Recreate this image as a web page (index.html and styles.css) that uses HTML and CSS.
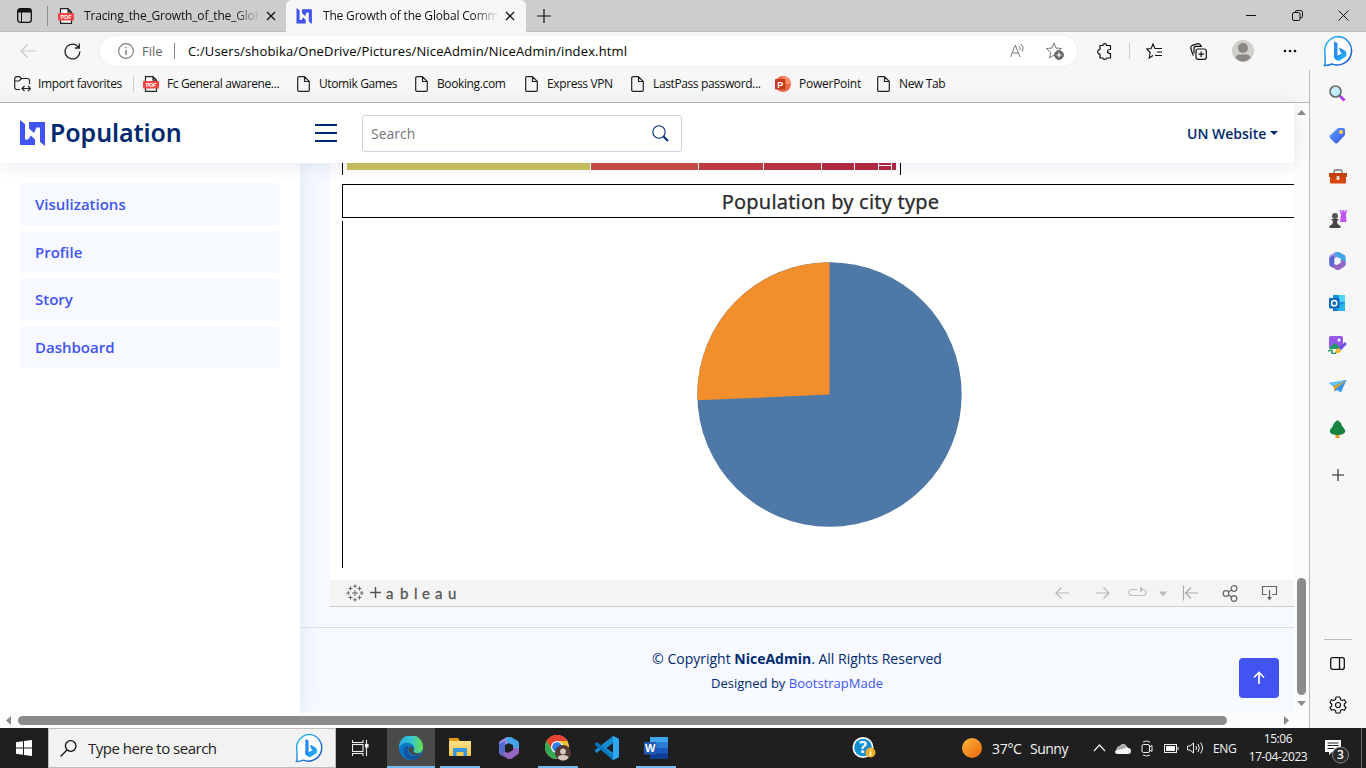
FILE: index.html
```html
<!DOCTYPE html>
<html lang="en">
<head>
<meta charset="utf-8">
<title>The Growth of the Global Community</title>
<link rel="stylesheet" href="styles.css">
</head>
<body>
<svg class="defs" width="0" height="0">
  <defs>
    <linearGradient id="gBing" x1="0" y1="0" x2="1" y2="1"><stop offset="0" stop-color="#22c3f5"/><stop offset="1" stop-color="#1b49c8"/></linearGradient>
    <linearGradient id="gB" x1="0" y1="0" x2="1" y2="1"><stop offset="0" stop-color="#1a6ff0"/><stop offset="1" stop-color="#28c0f8"/></linearGradient>
    <linearGradient id="gTag" x1="0" y1="0" x2="1" y2="1"><stop offset="0" stop-color="#5aa4ff"/><stop offset="1" stop-color="#3b4df0"/></linearGradient>
    <linearGradient id="gEdge" x1="0" y1="0" x2="1" y2="0"><stop offset="0" stop-color="#2aa8e8"/><stop offset=".5" stop-color="#35c4cf"/><stop offset="1" stop-color="#6be04a"/></linearGradient>
    <linearGradient id="gSun" x1="0" y1="0" x2="1" y2="1"><stop offset="0" stop-color="#f5b83a"/><stop offset="1" stop-color="#f0640a"/></linearGradient>
    <linearGradient id="gFolder" x1="0" y1="0" x2="0" y2="1"><stop offset="0" stop-color="#ffe08a"/><stop offset="1" stop-color="#f8c843"/></linearGradient>
  </defs>
  <symbol id="bing" viewBox="0 0 32 32"><path d="M16 1.500A14.300 14.300 0 1 1 9 29C6.500 30 4 30.500 1.500 30.500C2.800 28 2.500 25 1.700 16A14.300 14.300 0 0 1 16 1.500Z" fill="#fff" stroke="url(#gBing)" stroke-width="1.500"/><path d="M11 6.500L14.500 8V20L11 22.500Z" fill="#2a8cf5"/><path d="M16 12.500L21 15Q25 17.500 23 21.500L16.500 25.500Q13 26.500 11 22.500V19L14.500 20.500L19 18.500L17.300 17Z" fill="url(#gB)"/></symbol>
  <symbol id="logo" viewBox="0 0 26 26"><path d="M0 0L5 4V19.500H8L11 15.500L15 19.500V25H0Z" fill="#4154f1"/><path d="M9 2H25V26L20 22V7.500H16.500L14 13L9 8.500Z" fill="#4154f1"/></symbol>
  <symbol id="page" viewBox="0 0 13 16"><path d="M.700 2Q.700 .700 2 .700H7.500L12.300 5.500V14Q12.300 15.300 11 15.300H2Q.700 15.300 .700 14ZM7.500 .700V5.500H12.300" fill="none" stroke="#222" stroke-width="1.200" stroke-linejoin="round"/></symbol>
  <symbol id="x" viewBox="0 0 10 10"><path d="M1 1L9 9M9 1L1 9" stroke="#111" stroke-width="1.300"/></symbol>
  <symbol id="m365" viewBox="0 0 20 22"><path d="M8 0L1 4Q0 5 0 7V15Q0 17 2 18L6 20Q3 17 6 14V8L13 4Z" fill="#a08be8"/><path d="M8 0L12 0L19 4Q20 5 20 7V14L14 12V8L9 6Q6 3 8 0Z" fill="#43a5e8"/><path d="M20 12V16L18 18L12 22H9L3 18Q2 16 5 14.500L9 16L14 13V10Z" fill="#9466c4"/><path d="M0 12V7L6 4V14Q4 15 5 19L1 17Z" fill="#5469d0"/></symbol>
</svg>

<div class="tabbar">
  <span class="tab-menu"><svg width="15" height="15" viewBox="0 0 15 15"><rect x=".700" y=".700" width="13.600" height="13.600" rx="2.500" fill="none" stroke="#111" stroke-width="1.300"/><path d="M1 3Q1 1 3 1H12Q14 1 14 3V4.500H1Z" fill="#111"/><path d="M4.500 4V14" stroke="#111"/></svg></span>
  <div class="tab">
    <svg width="16" height="16"><path d="M2.500 8V.700H10L13.500 4.200V15.300H2.500V12M10 .700V4.200H13.500" fill="#fff" stroke="#222" stroke-width="1.200"/><rect x="0" y="5" width="16" height="7.500" rx="1" fill="#f94444"/><text x="8" y="10.900" class="pdf-text">PDF</text></svg><span class="tab-title">Tracing_the_Growth_of_the_Global</span><svg width="10" height="10"><use href="#x"/></svg>
  </div>
  <div class="tab tab-active">
    <svg width="17" height="16"><use href="#logo"/></svg><span class="tab-title">The Growth of the Global Community</span><svg width="10" height="10"><use href="#x"/></svg>
  </div>
  <svg class="new-tab" width="14" height="14"><path d="M7 0V14M0 7H14" stroke="#111" stroke-width="1.200"/></svg>
  <div class="window-buttons">
    <svg width="11" height="11"><path d="M0 5.500H10" stroke="#111"/></svg>
    <svg width="11" height="11" fill="none" stroke="#111"><rect x=".500" y="2.500" width="7.500" height="8" rx="1.500"/><path d="M3 2.500Q3 .500 5 .500H8.500Q10.500 .500 10.500 2.500V6.500Q10.500 8 8 8"/></svg>
    <svg width="11" height="11"><path d="M.500 .500L10.500 10.500M10.500 .500L.500 10.500" stroke="#111"/></svg>
  </div>
</div>

<div class="toolbar">
  <span class="slot"><svg width="17" height="14" fill="none" stroke="#c9c9c9" stroke-width="1.200"><path d="M16 7H1M7.500 .500L1 7L7.500 13.500"/></svg></span>
  <span class="slot"><svg width="17" height="17" fill="none" stroke="#222" stroke-width="1.300"><path d="M15.900 8.500A7.400 7.400 0 1 1 12 2L15 4.500M15.300 .500V5H10.800"/></svg></span>
  <div class="address">
    <svg width="16" height="16" fill="none" stroke="#777" stroke-width="1.100"><circle cx="8" cy="8" r="7.400"/><path d="M8 7V12M8 4V5.300" stroke-width="1.400"/></svg>
    <span class="scheme">File</span>
    <span class="url">C:/Users/shobika/OneDrive/Pictures/NiceAdmin/NiceAdmin/index.html</span>
    <svg class="read" width="16" height="16" fill="none" stroke="#777"><path d="M.500 14L5.300 2L10 14M2.200 10H8.500M9 3Q11 4.500 10 7M11 1Q14.500 4 12.500 8.500"/></svg>
    <svg width="18" height="18" fill="none" stroke="#777"><path d="M8 1L10 6L15.500 6.500L11.500 10M8 1L6 6L.500 6.500L4.700 10.500L3.500 16L8 13"/><circle cx="13" cy="13" r="4.500" fill="#666"/><path d="M13 10.500V15.500M10.500 13H15.500" stroke="#fff" stroke-width="1.200"/></svg>
  </div>
  <span class="slot"><svg width="16" height="17" fill="none" stroke="#111" stroke-width="1.200"><path d="M3 2.500H6Q6 .700 7.700 .700T9.500 2.500H13.500V6.500Q10.500 6.500 10.500 8.500T13.500 10.500V15H9.500Q9.500 16.300 7.700 16.300T6 15H3V11Q.700 11 .700 8.800T3 6.500Z" stroke-linejoin="round"/></svg></span>
  <i class="bar-sep"></i>
  <span class="slot"><svg width="17" height="17" fill="none" stroke="#111" stroke-width="1.100"><path d="M11 5.500L9 5.500L7 1L5.200 5.500L.800 6L4.200 9.500L3.200 15L7 12.500M9.500 5.500H16M11 9H16M9 12.500H16"/></svg></span>
  <span class="slot"><svg width="17" height="17" fill="none" stroke="#111" stroke-width="1.200"><rect x="6" y="6" width="10.300" height="10.300" rx="2"/><path d="M11.100 8.500V14M8.500 11.200H14M3.500 12.500Q2.500 12 2.500 10.500L.800 5.500Q.500 3 2.500 2.300L8 .700Q10 .500 11 3M4 10.500V5.500Q4 3.300 6 3.300H12"/></svg></span>
  <span class="slot"><svg width="22" height="22"><circle cx="11" cy="11" r="11" fill="#d0cfcc"/><circle cx="11" cy="8" r="5" fill="#8b8784"/><path d="M3.500 18Q4 14.500 8 14.500H14Q18 14.500 18.500 18Q11 25 3.500 18" fill="#8b8784"/></svg></span>
  <span class="slot"><svg width="14" height="4" fill="#111"><circle cx="2" cy="2" r="1.300"/><circle cx="7" cy="2" r="1.300"/><circle cx="12" cy="2" r="1.300"/></svg></span>
  <span class="slot"><svg width="32" height="32"><use href="#bing"/></svg></span>
</div>

<div class="body-row">
  <div class="browser-main">
    <div class="bookmarks">
      <span><svg width="17" height="16" fill="none" stroke="#222" stroke-width="1.200"><path d="M6 13.500H3Q.700 13.500 .700 11V3Q.700 .700 3 .700H5.500L7.500 2.500H13.500Q15.500 2.500 15.500 4.500V8M.700 5H5L7.500 2.500M8.500 12.500H16M10.500 10L8 12.500L10.500 15M14 10L16.500 12.500L14 15"/></svg>Import favorites</span>
      <i></i>
      <span><svg width="16" height="16"><path d="M2.500 8V.700H10L13.500 4.200V15.300H2.500V12M10 .700V4.200H13.500" fill="#fff" stroke="#222" stroke-width="1.200"/><rect x="0" y="5" width="16" height="7.500" rx="1" fill="#f94444"/><text x="8" y="10.900" class="pdf-text">PDF</text></svg>Fc General awarene...</span>
      <span><svg width="13" height="16"><use href="#page"/></svg>Utomik Games</span>
      <span><svg width="13" height="16"><use href="#page"/></svg>Booking.com</span>
      <span><svg width="13" height="16"><use href="#page"/></svg>Express VPN</span>
      <span><svg width="13" height="16"><use href="#page"/></svg>LastPass password...</span>
      <span class="ppt"><svg width="16" height="16"><circle cx="8" cy="8" r="8" fill="#ed6c47"/><path d="M8 0A8 8 0 0 1 16 8H8Z" fill="#ff8f6b"/><rect y="3" width="10.500" height="10.500" rx="1" fill="#c43e1c"/><text x="5.200" y="11.500" class="ppt-text">P</text></svg>PowerPoint</span>
      <span><svg width="13" height="16"><use href="#page"/></svg>New Tab</span>
    </div>
    <div class="viewport-row">
      <div class="viewport">
        <header class="header">
          <svg class="brand-logo" width="26" height="26"><use href="#logo"/></svg>
          <span class="brand">Population</span>
          <svg class="burger" width="22" height="20"><path d="M0 2H22M0 10H22M0 18H22" stroke="#012970" stroke-width="2"/></svg>
          <div class="search"><span>Search</span><svg width="17" height="17" fill="none" stroke="#012970"><circle cx="7" cy="7" r="6.200" stroke-width="1.100"/><path d="M11.500 11.500L16 16" stroke-width="2"/></svg></div>
          <span class="un">UN Website</span><i class="caret"></i>
        </header>
        <div class="page">
          <nav class="sidenav"><a>Visulizations</a><a>Profile</a><a>Story</a><a>Dashboard</a></nav>
          <main class="main">
            <div class="viz">
              <div class="treemap">
                <b class="t1"></b><b class="t2"></b><b class="t3"></b><b class="t4"></b><b class="t5"></b><b class="t6"></b><b class="t7"></b><b class="t8"></b>
              </div>
              <h2 class="viz-title">Population by city type</h2>
              <div class="chart"><svg width="267" height="267" viewBox="-133.500 -133.500 267 267"><circle r="132.200" fill="#4e79a7"/><path d="M0 0L-132 5.800A132.200 132.200 0 0 1 0 -132.200Z" fill="#f28e2b"/></svg></div>
              <div class="tb-bar">
                <svg class="tb-mark" width="18" height="18" stroke="#666" stroke-width="1"><path d="M9 6V12M6 9H12M9 .500V4M7.200 2.200H10.800M9 14V17.500M7.200 15.800H10.800M2.200 7V11M.500 9H4M15.800 7V11M14 9H17.500M4.500 2.500V6.500M2.500 4.500H6.500M13.500 2.500V6.500M11.500 4.500H15.500M4.500 11.500V15.500M2.500 13.500H6.500M13.500 11.500V15.500M11.500 13.500H15.500"/></svg>
                <span class="tb-word"><svg width="11" height="11"><path d="M5.500 0V11M0 5.500H11" stroke="#555" stroke-width="1.500"/></svg><em>a</em><em>b</em><em>l</em><em>e</em><em>a</em><em>u</em></span>
                <svg class="tb-tools" width="226" height="22" fill="none" stroke="#b5b5b5" stroke-width="1.200">
                  <path d="M15 11H2M7.500 5.500L2 11L7.500 16.500M42 11H55M49.500 5.500L55 11L49.500 16.500"/>
                  <path d="M83 7.500H78Q75 7.500 75 10.500T78 13.500H89Q92 13.500 92 10.500Q92 8 90 7.500H86" stroke="#c0c0c0"/><path d="M86 4.500L90 7.500L86 10.500Z" fill="#c0c0c0" stroke="none"/><path d="M105 9.500H113L109 14.500Z" fill="#bbb" stroke="none"/>
                  <path d="M129.500 3.500V18.500M144 11H131.500M137 5.500L131.500 11L137 16.500" stroke="#aaa"/>
                  <g stroke="#666" stroke-width="1.200"><circle cx="172" cy="11.500" r="2.800"/><circle cx="180" cy="6.500" r="2.800"/><circle cx="180" cy="16.500" r="2.800"/><path d="M174.400 10L177.600 8M174.400 13L177.600 15M212.500 12.500H208.500V4.500H222.500V12.500H218.500M215.500 8V16"/><path d="M213 15H218L215.500 18.500Z" fill="#666" stroke="none"/></g>
                </svg>
              </div>
            </div>
            <footer class="footer">
              <div class="copyright">© Copyright <strong>NiceAdmin</strong>. All Rights Reserved</div>
              <div class="credits">Designed by <span>BootstrapMade</span></div>
              <a class="top"><svg width="12" height="14" fill="none" stroke="#fff" stroke-width="1.700"><path d="M6 13V1.500M1 6.500L6 1.500L11 6.500"/></svg></a>
            </footer>
          </main>
        </div>
      </div>
      <div class="vscroll"><svg width="9" height="6"><path d="M0 5L4.500 0L9 5Z" fill="#8b8b8b"/></svg><i></i><svg width="9" height="6"><path d="M0 0L4.500 5L9 0Z" fill="#8b8b8b"/></svg></div>
    </div>
    <div class="hscroll"><svg width="5" height="9"><path d="M5 0L0 4.500L5 9Z" fill="#8b8b8b"/></svg><i></i><svg width="5" height="9"><path d="M0 0L5 4.500L0 9Z" fill="#8b8b8b"/></svg></div>
  </div>
  <aside class="edge-side">
    <span><svg width="17" height="17"><path d="M10.500 10.500L12.500 12.500" stroke="#666" stroke-width="2"/><circle cx="6.500" cy="6.500" r="5.500" fill="#c4ebff" stroke="#666" stroke-width="1.600"/><path d="M11.500 11.500L15.500 15.500" stroke="#b33cf0" stroke-width="3"/></svg></span>
    <span><svg width="17" height="17"><path d="M9 1H14Q16 1 16 3V8L8.500 16Q7 17 5.500 15.500L1 11Q0 9.500 1 8.500Z" fill="url(#gTag)"/><circle cx="12" cy="5" r="2" fill="#ffd43d"/></svg></span>
    <span><svg width="18" height="16"><path d="M5 5V2Q5 1 6 1H12Q13 1 13 2V5" fill="none" stroke="#777" stroke-width="1.300"/><rect x="1" y="8" width="16" height="6.500" rx="1" fill="#d7470c"/><path d="M0 4H18V8Q9 10 0 8Z" fill="#c43f0c"/><rect x="7.500" y="7" width="3" height="4" rx="1" fill="#ddd"/></svg></span>
    <span><svg width="18" height="18"><path d="M10.500 0H12.500V2H13.500V0H15.500V2H16.500V0H18L17 5L17.500 12H11L12 5Z" fill="#bd55f5"/><circle cx="6" cy="6" r="3" fill="#555"/><path d="M2.500 9H9.500V10.500H8L8.500 14L11.500 16V18H.500V16L3.500 14L4 10.500H2.500Z" fill="#444"/></svg></span>
    <span><svg width="17" height="18"><use href="#m365"/></svg></span>
    <span><svg width="17" height="17"><path d="M4 0H16V15H4Z" fill="#198fdf"/><path d="M10 0H16V7H10Z" fill="#50d4ff"/><path d="M4 8L16 16H4Z" fill="#1371bd"/><path d="M16 8V16H10L4 12Z" fill="#28b4f0"/><rect y="3" width="10.500" height="10.500" rx="1" fill="#0f6abc"/><circle cx="5.200" cy="8.200" r="2.600" fill="none" stroke="#fff" stroke-width="1.500"/></svg></span>
    <span><svg width="19" height="18"><rect x="1" y="0" width="14" height="13" rx="2" fill="#9558e8"/><path d="M1 12L7 7L14 13H2Z" fill="#219b64"/><circle cx="11" cy="4" r="1.500" fill="#fff"/><path d="M18 7L11 14" stroke="#6b50f0" stroke-width="3"/><path d="M11 12Q7 13 7 17Q12 18 13 14Z" fill="#f7b62e"/><path d="M0 15Q5 13 4 16T8 17" fill="none" stroke="#229269" stroke-width="1.500"/></svg></span>
    <span><svg width="18" height="14"><path d="M0 3L17.500 0L12 12.500L8 10L5.500 11.500L5 7Z" fill="#3599f1"/><path d="M0 3L17.500 0L5 6Z" fill="#62c6ff"/><path d="M17 1L4.500 6L5.500 11.500L7.500 8Z" fill="#e4a126"/></svg></span>
    <span><svg width="17" height="18"><rect x="6.500" y="13" width="4" height="5" fill="#e89a28"/><path d="M8.500 0Q12 2 13 6Q17 10 16 12Q15 15 8.500 15T1 12Q0 10 4 6Q5 2 8.500 0" fill="#16843e"/></svg></span>
    <span class="add"><svg width="12" height="12"><path d="M6 0V12M0 6H12" stroke="#222" stroke-width="1.100"/></svg></span>
    <i></i>
    <span><svg width="15" height="13" fill="none" stroke="#111" stroke-width="1.300"><rect x=".700" y=".700" width="13.600" height="11.600" rx="2"/><path d="M9.500 1V12"/></svg></span>
    <span><svg width="18" height="18" viewBox="0 0 18 18" fill="none" stroke="#111" stroke-width="1.200"><path d="M7 1H11L11.500 3.500L13.300 4.500L15.500 3.700L17 6.500L15.300 8V10L17 11.500L15.500 14.300L13.300 13.500L11.500 14.500L11 17H7L6.500 14.500L4.700 13.500L2.500 14.300L1 11.500L2.700 10V8L1 6.500L2.500 3.700L4.700 4.500L6.500 3.500Z" stroke-linejoin="round"/><circle cx="9" cy="9" r="2.500"/></svg></span>
  </aside>
</div>

<div class="taskbar">
  <span class="task start"><svg width="16" height="16" fill="#fff"><path d="M0 2.200L7 1.200V7.500H0ZM8 1L16 0V7.500H8ZM0 8.500H7V14.800L0 13.800ZM8 8.500H16V16L8 15Z"/></svg></span>
  <div class="win-search"><svg width="17" height="17" fill="none" stroke="#111" stroke-width="1.300"><circle cx="10.700" cy="6" r="5.300"/><path d="M7 10L.500 16.500"/></svg><span>Type here to search</span><svg width="30" height="30"><use href="#bing"/></svg></div>
  <span class="task view"><svg width="17" height="16" fill="none" stroke="#eee" stroke-width="1.100"><path d="M.500 0V2.500H11V0M.500 16V13.500H11V16M14.500 0V16"/><rect x=".500" y="4.500" width="10.500" height="7"/><rect x="13.500" y="4.500" width="2.500" height="2.500" fill="#fff"/></svg></span>
  <span class="task on edge"><svg width="24" height="24"><circle cx="12" cy="12" r="12" fill="#0c78c5"/><path d="M0 11A12 12 0 0 1 24 11Q24 17 18 17Q14 17 15 14Q16 12 14 9Q7 3 0 11" fill="url(#gEdge)"/><path d="M9 10Q7 20 15 20Q19 20 22.500 18A12 12 0 0 1 13 24Q3 22 5 13Q6 10 9 10" fill="#1453a0"/><path d="M12 10.500Q9.500 11 9.500 14Q11 20 19 19Q24 17 24 17Q20 18 16 17Q14 16 14.500 14Q15.500 11 12 10.500" fill="#4a4a4a"/></svg></span>
  <span class="task on"><svg width="22" height="20"><path d="M0 0H9L11 3H22V8H0Z" fill="#e19b10"/><rect y="3" width="22" height="15" rx="1" fill="url(#gFolder)"/><path d="M4 18V11Q4 10 5 10H17Q18 10 18 11V18H14.500V14H7.500V18Z" fill="#3a96dd"/></svg></span>
  <span class="task"><svg width="20" height="22"><use href="#m365"/></svg></span>
  <span class="task on"><svg width="26" height="26"><circle cx="12" cy="12" r="12" fill="#f7c52e"/><path d="M1.600 6A12 12 0 0 1 22.500 6H12L7 15Z" fill="#ea4335"/><path d="M1.600 6L7 15L14 18L12 24A12 12 0 0 1 1.600 6" fill="#35a853"/><circle cx="12" cy="12" r="6" fill="#fff"/><circle cx="12" cy="12" r="4.800" fill="#307de8"/><circle cx="18" cy="18" r="8" fill="#513a35"/><circle cx="18" cy="16.500" r="2.900" fill="#d7c8c0"/><path d="M12.500 23Q13 20 18 20T23.500 23Q18 28 12.500 23" fill="#d7c8c0"/></svg></span>
  <span class="task"><svg width="24" height="24"><path d="M18 0L24 3V21L18 24L6 13L2 17L0 15.500V14L18 0Z" fill="#168bd0"/><path d="M2 6L18 20V24L0 9V7.500Z" fill="#0877bd"/><path d="M18 0L24 3V21L18 24Z" fill="#31a7f2"/><path d="M18 7V17L11.500 12Z" fill="#1f1f1f"/></svg></span>
  <span class="task on"><svg width="24" height="22"><rect x="6" width="18" height="22" rx="1" fill="#185abd"/><path d="M6 0H24V5.500H6Z" fill="#41a5ee"/><path d="M6 5.500H24V11H6Z" fill="#2b7cd3"/><path d="M6 16.500H24V22H6Z" fill="#103f91"/><rect y="5" width="12.500" height="12.500" rx="1" fill="#2459b5"/><text x="6.200" y="15" class="word-text">W</text></svg></span>
  <span class="help"><svg width="24" height="22"><circle cx="11" cy="10.500" r="10.500" fill="#fff"/><circle cx="11" cy="10.500" r="8.800" fill="#108ed0"/><text x="11" y="16" class="help-text">?</text><circle cx="18.500" cy="15.500" r="5" fill="#f2ad21"/><path d="M18.500 14.500V19M18.500 12V13.300" stroke="#fff" stroke-width="1.500"/></svg></span>
  <span class="weather"><svg width="20" height="20"><circle cx="10" cy="10" r="10" fill="url(#gSun)"/></svg><span class="temp">37°C</span><span>Sunny</span></span>
  <span class="tray"><svg width="13" height="8" fill="none" stroke="#eee" stroke-width="1.200"><path d="M1 7L6.500 1L12 7"/></svg></span>
  <span class="tray"><svg width="16" height="11"><path d="M2 7Q2 3 5 3Q7 0 10 1.500L13 5Q16 5 16 8Q16 11 13 11H3Q0 11 0 8.500Q0 7 2 7" fill="#f5f5f5"/><path d="M1 7Q2 3 5 3Q7 0 10 1.500L12 4L8 6Z" fill="#aaa"/></svg></span>
  <span class="tray"><svg width="12" height="17" fill="none" stroke="#eee"><rect x="1" y="4.500" width="7.500" height="8" rx="1.500"/><path d="M8.500 7L11 5.500V11.500L8.500 10M2 2Q5.500 0 9 2M2 15Q5.500 17 9 15"/></svg></span>
  <span class="tray"><svg width="15" height="9" fill="none" stroke="#eee"><rect x=".500" y=".500" width="12" height="8"/><rect x="2.500" y="2.500" width="8" height="4" fill="#fff"/><path d="M14 3V6"/></svg></span>
  <span class="tray"><svg width="17" height="14" fill="none" stroke="#eee"><path d="M.500 5H3L6.500 2V12L3 9H.500ZM9 5Q10 7 9 9M11 3Q13.500 7 11 11M13.500 1.500Q17.500 7 13.500 12.500"/></svg></span>
  <span class="lang">ENG</span>
  <span class="clock"><span>15:06</span><span>17-04-2023</span></span>
  <span class="notif"><svg width="28" height="28"><path d="M2 3H18V15H9L6 18V15H2Z" fill="#fff"/><path d="M4.500 6H15.500M4.500 8.500H15.500M4.500 11.500H11" stroke="#222"/><circle cx="17.500" cy="18" r="8" fill="#2b2b2b" stroke="#888"/><text x="17.500" y="22" class="badge-text">3</text></svg></span>
</div>
</body>
</html>
```
FILE: styles.css
```css
* { box-sizing: border-box; }
body { margin: 0; width: 1366px; height: 768px; overflow: hidden; background: #f7f7f7; font-family: "Open Sans", "Noto Sans", sans-serif; font-size: 12px; color: #111; display: flex; flex-direction: column; }
svg { flex: none; display: block; }
.defs { position: absolute; }
.pdf-text { font: 700 5.5px "Liberation Sans", sans-serif; fill: #fff; text-anchor: middle; }
.ppt-text { font: 700 9px "Liberation Sans", sans-serif; fill: #fff; text-anchor: middle; }
.word-text { font: 700 11px "Liberation Sans", sans-serif; fill: #fff; text-anchor: middle; }
.help-text { font: 700 16px "Open Sans", sans-serif; fill: #fff; text-anchor: middle; }
.badge-text { font: 600 12px "Open Sans", sans-serif; fill: #fff; text-anchor: middle; }

.tabbar { height: 32px; flex: none; background: #cdcdcd; display: flex; align-items: center; border-bottom: 1px solid #bdbdbd; }
.tab-menu { width: 48px; height: 20px; padding-left: 17px; display: flex; align-items: center; border-right: 1px solid #8d8d8d; }
.tab { width: 238px; height: 32px; padding: 0 10px; display: flex; align-items: center; }
.tab-title { flex: none; width: 174px; margin: 0 8px 0 10px; overflow: hidden; white-space: nowrap; letter-spacing: -.18px; -webkit-mask-image: linear-gradient(to right, #000 150px, transparent 176px); }
.tab-active { width: 240px; background: #f7f7f7; border-radius: 6px 6px 0 0; }
.new-tab { margin-left: 11px; }
.window-buttons { margin-left: auto; display: flex; gap: 35px; padding-right: 17px; }

.toolbar { height: 38px; flex: none; display: grid; grid-template-columns: 56px 32px 993px 48px 1px 48px 40px 50px 44px 54px; align-items: center; }
.slot { display: flex; justify-content: center; align-items: center; }
.bar-sep { height: 16px; background: #ccc; }
.address { margin: 0 4px 0 12px; height: 30px; border-radius: 15px; background: #fff; box-shadow: 0 0 3px #e8e8e8; display: flex; align-items: center; padding: 0 13px 0 18px; font-size: 13px; }
.scheme { color: #666; margin-left: 8px; padding-right: 12px; width: 33px; border-right: 1px solid #888; line-height: 16px; }
.url { margin-left: 13px; letter-spacing: .15px; color: #000; }
.read { margin: 0 20px 0 auto; }

.body-row { height: 658px; flex: none; display: flex; }
.browser-main { width: 1309px; flex: none; display: flex; flex-direction: column; }
.bookmarks { height: 33px; border-bottom: 1px solid #b9b9b9; padding: 0 0 5px 14px; display: grid; grid-template-columns: 119px 10px 154px 118px 110px 106px 144px 102px 120px; align-items: center; letter-spacing: -.38px; }
.bookmarks > span { display: flex; align-items: center; white-space: nowrap; gap: 8px; }
.bookmarks > span:first-child { gap: 7px; }
.bookmarks > i { width: 1px; height: 16px; background: #ccc; }
.bookmarks > span:nth-child(n+4) { gap: 9px; }
.bookmarks > span.ppt { gap: 8px; letter-spacing: -.25px; }
.viewport-row { height: 610px; display: flex; }
.viewport { width: 1294px; height: 610px; background: #f6f9ff; font-size: 14px; color: #012970; display: flex; flex-direction: column; }
.header { height: 60px; flex: none; background: #fff; box-shadow: 0 2px 20px rgba(1,41,112,.1); display: flex; align-items: center; padding-left: 20px; position: relative; z-index: 2; }
.brand { font: 600 25px/30px "Noto Sans", sans-serif; width: 130px; margin: 0 0 3px 4px; letter-spacing: -.1px; }
.burger { margin-left: 135px; }
.search { margin-left: 25px; width: 320px; height: 37px; border: 1px solid #ccd3e0; border-radius: 3px; display: flex; align-items: center; justify-content: space-between; padding: 0 12px 0 8px; color: #757575; }
.un { width: 80px; margin-left: 505px; font-weight: 600; white-space: nowrap; }
.caret { margin-left: 3px; border: 4px solid transparent; border-top-color: #012970; border-bottom: 0; }
.page { height: 550px; display: flex; }
.sidenav { width: 300px; flex: none; padding: 20px; background: #fff; box-shadow: 0 0 20px rgba(1,41,112,.1); display: flex; flex-direction: column; gap: 5px; }
.sidenav a { height: 42.5px; flex: none; padding-left: 15px; border-radius: 4px; background: #f6f9ff; color: #4154f1; font-size: 15px; font-weight: 600; line-height: 42px; }
.main { width: 994px; display: flex; flex-direction: column; }
.viz { margin-left: 30px; height: 444px; flex: none; background: #fff; display: flex; flex-direction: column; border-bottom: 1px solid #cfcfcf; }
.treemap { width: 559px; height: 12px; margin: 0 0 9px 12px; border: solid #000; border-width: 0 1px; padding-left: 4px; display: flex; gap: 1px; }
.treemap b { height: 7px; }
.t1 { width: 243px; background: #cbc35c; }
.t2 { width: 107px; background: #cf4d43; }
.t3 { width: 64px; background: #c43d40; }
.t4 { width: 57px; background: #bc3340; }
.t5 { width: 32px; background: #b72b40; }
.t6 { width: 23px; background: #b7273f; }
.t7 { width: 12px; background: linear-gradient(#b7273f 2px, #fff 2px 3px, #b7273f 3px); }
.t8 { width: 4px; background: #b7273f; }
.viz-title { height: 34px; flex: none; margin: 0 0 3px 12px; border: 1px solid #000; border-right: 0; text-align: center; font: 400 20px/34px "Noto Sans", sans-serif; letter-spacing: .2px; color: #2b2b2b; -webkit-text-stroke: .25px #2b2b2b; padding-left: 24px; }
.chart { height: 347px; flex: none; margin: 0 0 12px 12px; border-left: 1px solid #000; padding: 40px 0 0 353px; }
.tb-bar { height: 26px; background: #f4f4f4; display: flex; align-items: center; padding: 0 0 1px 16px; }
.tb-word { margin-left: 6px; display: grid; grid-template-columns: 15px 14px 14px 8px 13px 13px 10px; align-items: center; color: #555; font: 400 15px/20px Lato, sans-serif; -webkit-text-stroke: .3px #555; }
.tb-word em { font-style: normal; padding-left: 1px; }
.tb-tools { margin-left: auto; margin-right: 14px; }
.footer { margin-top: 20px; border-top: 1px solid #cddfee; flex: 1; text-align: center; position: relative; padding-top: 20px; }
.copyright { line-height: 22px; }
.credits { font-size: 13px; line-height: 20px; padding-top: 3px; }
.credits span { color: #4154f1; }
.top { position: absolute; right: 15px; bottom: 15px; width: 40px; height: 40px; border-radius: 4px; background: #4154f1; display: flex; align-items: center; justify-content: center; }
.vscroll { width: 15px; background: #fcfcfc; display: flex; flex-direction: column; align-items: center; padding: 7px 0 6px; }
.vscroll i { width: 9px; height: 117px; margin: auto 0 6px; border-radius: 5px; background: #8b8b8b; }
.hscroll { height: 15px; background: #fcfcfc; display: flex; align-items: center; padding: 0 20px 0 6px; }
.hscroll i { width: 1209px; height: 9px; margin-left: 7px; border-radius: 5px; background: #8b8b8b; }
.hscroll svg:last-child { margin-left: auto; }
.edge-side { width: 57px; border-left: 1px solid #b9b9b9; padding: 2px 1px 0 0; display: flex; flex-direction: column; align-items: center; }
.edge-side span { height: 42px; display: flex; align-items: center; justify-content: center; }
.edge-side .add { height: 50px; }
.edge-side > i { width: 28px; height: 1px; margin: auto 0 2px; background: #bbb; }
.edge-side span:last-child { margin-bottom: 2px; }

.taskbar { height: 40px; flex: none; background: #1f1f1f; color: #f4f4f4; display: flex; align-items: center; }
.task { width: 49px; height: 40px; flex: none; display: flex; align-items: center; justify-content: center; }
.start { width: 48px; }
.view { width: 51px; padding-right: 2px; }
.task.on { background: linear-gradient(#76b9ed, #76b9ed) center bottom / 40px 2px no-repeat; }
.task.edge { width: 48px; background: linear-gradient(#76b9ed, #76b9ed) center bottom / 48px 2px no-repeat #4a4a4a; }
.win-search { width: 288px; height: 40px; flex: none; background: #f2f2f2; border: 1px solid #bcbcbc; color: #222; font-size: 15px; display: flex; align-items: center; padding: 0 10px 0 11px; }
.win-search span { margin: 0 auto 0 11px; letter-spacing: -.5px; }
.help { width: 282px; padding-left: 172px; }
.weather { width: 125px; display: flex; align-items: center; font-size: 14px; letter-spacing: -.5px; }
.temp { width: 38px; margin-left: 10px; letter-spacing: -.3px; }
.tray { width: 24px; display: flex; justify-content: center; }
.lang { width: 36px; padding-left: 6px; letter-spacing: -.4px; }
.clock { width: 70px; display: flex; flex-direction: column; text-align: center; line-height: 18px; letter-spacing: -.4px; }
.notif { width: 49px; height: 40px; padding: 9px 0 0 10px; border-right: 1px solid #666; }
```
